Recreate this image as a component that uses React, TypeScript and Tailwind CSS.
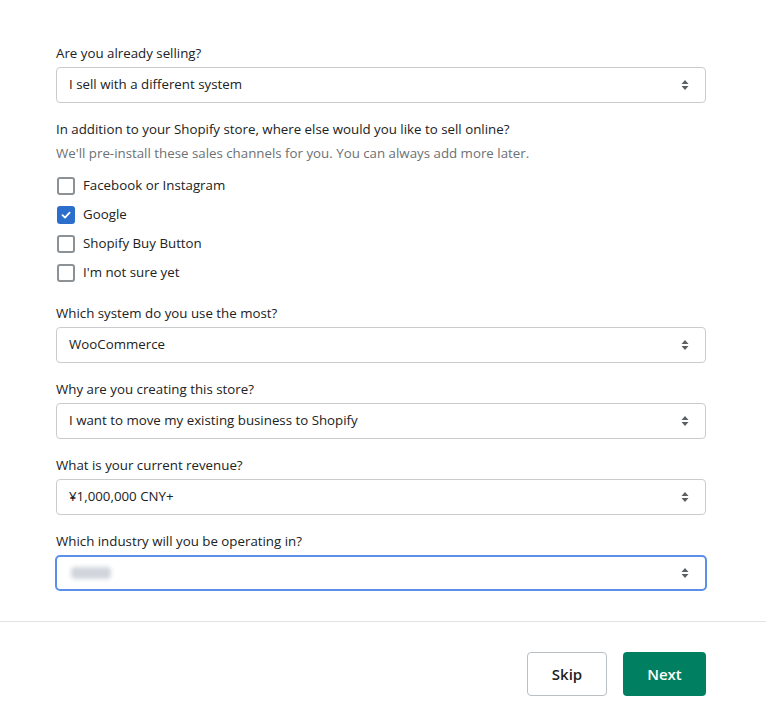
const font = { fontFamily: '"Open Sans", "Noto Sans", sans-serif' };

const Arrows = () => (
  <svg width="8" height="12" viewBox="0 0 8 12" className="text-[#5c5f62]">
    <path d="M4 1 L7.5 5 H0.5 Z" fill="currentColor" />
    <path d="M4 11 L7.5 7 H0.5 Z" fill="currentColor" />
  </svg>
);

interface FieldProps {
  label: string;
  value?: string;
  focused?: boolean;
  blurred?: boolean;
}

const SelectField = ({ label, value, focused, blurred }: FieldProps) => (
  <div className="flex flex-col gap-1">
    <label className="text-[13.3px] leading-5 text-[#202223]">{label}</label>
    <div
      className={
        focused
          ? "h-9 flex items-center justify-between pl-3 pr-4 rounded-[5px] bg-white border-2 border-[#5b8fe8] -mx-px"
          : "h-9 flex items-center justify-between pl-3 pr-4 rounded-[4px] bg-white border border-[#c9cccf]"
      }
    >
      {blurred ? (
        <div className="w-10 h-3 ml-[2px] bg-gray-300 blur-[2px] rounded-sm" />
      ) : (
        <span className="text-[13.3px] text-[#202223]">{value}</span>
      )}
      <Arrows />
    </div>
  </div>
);

const Check = ({ label, checked }: { label: string; checked?: boolean }) => (
  <div className="h-[29px] flex items-center gap-2">
    {checked ? (
      <div className="w-[18px] h-[18px] ml-px rounded-[3px] bg-[#2c6ecb] flex items-center justify-center">
        <svg width="12" height="12" viewBox="0 0 12 12">
          <path d="M2.5 6.2 L5 8.6 L9.6 3.6" stroke="white" strokeWidth="1.8" fill="none" strokeLinecap="round" strokeLinejoin="round" />
        </svg>
      </div>
    ) : (
      <div className="w-[18px] h-[18px] ml-px rounded-[3px] border-2 border-[#8c9196] bg-white" />
    )}
    <span className="text-[13.3px] text-[#202223]">{label}</span>
  </div>
);

export default function App() {
  return (
    <div className="w-[766px] h-[725px] bg-white overflow-hidden" style={font}>
      <div className="pl-14 pr-[60px] pt-[43px] pb-[30px] flex flex-col gap-4">
        <SelectField label="Are you already selling?" value="I sell with a different system" />

        {/* Sales channels */}
        <div className="flex flex-col">
          <p className="text-[13.3px] leading-5 text-[#202223]">
            In addition to your Shopify store, where else would you like to sell online?
          </p>
          <p className="mt-1 text-[13.3px] leading-5 text-[#6d7175]">
            We'll pre-install these sales channels for you. You can always add more later.
          </p>
          <div className="mt-2 flex flex-col">
            <Check label="Facebook or Instagram" />
            <Check label="Google" checked />
            <Check label="Shopify Buy Button" />
            <Check label="I'm not sure yet" />
          </div>
        </div>

        <SelectField label="Which system do you use the most?" value="WooCommerce" />
        <SelectField label="Why are you creating this store?" value="I want to move my existing business to Shopify" />
        <SelectField label="What is your current revenue?" value="¥1,000,000 CNY+" />
        <SelectField label="Which industry will you be operating in?" focused blurred />
      </div>

      {/* Footer actions */}
      <div className="border-t border-[#e1e3e5] px-[60px] pt-[30px] flex justify-end gap-4">
        <button className="w-20 h-11 rounded-[4px] border border-[#babfc3] bg-white text-[15px] font-semibold text-[#202223]">
          Skip
        </button>
        <button className="w-[83px] h-11 rounded-[4px] bg-[#008060] text-[15px] font-semibold text-white">
          Next
        </button>
      </div>
    </div>
  );
}
